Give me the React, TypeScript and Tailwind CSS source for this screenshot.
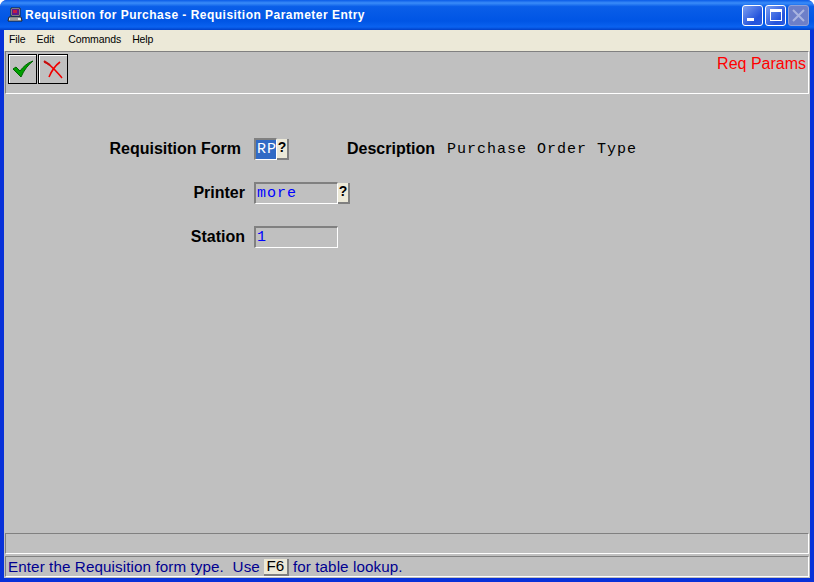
const sans = "font-['Liberation_Sans',Arial,sans-serif]";
const mono = "font-['Liberation_Mono','Courier_New',monospace]";
const sunken = "border-t border-r border-b border-l border-t-[#808080] border-r-white border-b-white border-l-[#808080]";
const field = "border-t-2 border-r border-b border-l-2 border-t-[#808080] border-r-white border-b-white border-l-[#808080]";

function AppIcon() {
  return (
    <svg width="16" height="16" viewBox="0 0 16 16" className="shrink-0">
      <path d="M4 1h9v8H4z" fill="#d8d8d8" stroke="#222" />
      <path d="M5 2h7v6H5z" fill="#5a1a8a" />
      <path d="M6 3h4v3H6z" fill="#c01848" />
      <path d="M2 10h12l1 4H1z" fill="#e8e8e8" stroke="#222" />
      <path d="M3 12h8" stroke="#555" />
    </svg>
  );
}

function CheckIcon() {
  return (
    <svg width="22" height="18" viewBox="0 0 22 18">
      <path d="M1 9l3-2 4 4C11 7 15 3 21 1c-5 4-9 9-12 16z" fill="#00a000" stroke="#006400" strokeWidth="1" />
    </svg>
  );
}

function CrossIcon() {
  return (
    <svg width="20" height="19" viewBox="0 0 20 19" fill="none">
      <path d="M1 2c6 1 12 9 18 16" stroke="#f00000" strokeWidth="1.6" />
      <path d="M17 2C13 5 9 10 6 17" stroke="#f00000" strokeWidth="1.6" />
      <path d="M1 1l6 4" stroke="#c01010" strokeWidth="2" />
    </svg>
  );
}

function WinButton({ children, off }: { children: React.ReactNode; off?: boolean }) {
  return (
    <div
      className={
        "flex h-[21px] w-[21px] items-center justify-center rounded-[3px] border " +
        (off ? "border-[#8fa0d8] bg-[#6d7fc8]" : "border-white bg-[linear-gradient(135deg,#7c9ff0,#2353dc_70%,#2a5ce0)]")
      }
    >
      {children}
    </div>
  );
}

function Lookup() {
  return (
    <div className="flex h-[21px] w-[12px] items-center justify-center border-r-2 border-b-2 border-[#808080] bg-[#ece9d8] pb-px text-[14px] font-bold text-black">
      ?
    </div>
  );
}

function Label({ children, width }: { children: React.ReactNode; width: string }) {
  return <div className={"text-right text-[16px] font-bold text-black " + width}>{children}</div>;
}

export default function App() {
  return (
    <div className={"flex h-[582px] w-[814px] flex-col overflow-hidden rounded-t-[7px] bg-[#0831d9] " + sans}>
      <div className="flex h-[30px] shrink-0 items-center bg-[linear-gradient(180deg,#0a5be8_0%,#3a8cf8_10%,#0a5ee8_22%,#0055e5_70%,#0a62f0_90%,#0040c8_100%)] pr-[5px] pl-[7px]">
        <AppIcon />
        <div className="ml-[2px] flex-1 text-[12px] font-bold tracking-[0.48px] whitespace-nowrap text-white">
          Requisition for Purchase - Requisition Parameter Entry
        </div>
        <div className="flex gap-[2px]">
          <WinButton>
            <div className="mt-[9px] mr-[4px] h-[3px] w-[7px] bg-white" />
          </WinButton>
          <WinButton>
            <div className="h-[12px] w-[12px] border border-t-[3px] border-white" />
          </WinButton>
          <WinButton off>
            <svg width="13" height="13" viewBox="0 0 13 13">
              <path d="M1 1l11 11M12 1L1 12" stroke="#a9b4e0" strokeWidth="2" />
            </svg>
          </WinButton>
        </div>
      </div>

      <div className="mx-1 mb-1 flex min-h-0 flex-1 flex-col bg-[#c0c0c0]">
        <div className="flex h-[21px] shrink-0 items-center gap-[11px] bg-[#ece9d8] px-[5px] pb-[2px] text-[10.5px] tracking-[-0.1px] text-black">
          <span>File</span>
          <span>Edit</span>
          <span className="ml-[3px]">Commands</span>
          <span>Help</span>
        </div>

        <div className={"mx-px flex h-[43px] shrink-0 justify-between pr-[2px] pl-[2px] " + sunken}>
          <div className="flex gap-px pt-[2px]">
            <div className="flex h-[30px] w-[29px] items-center justify-center border border-black shadow-[inset_1px_1px_0_#fff]">
              <CheckIcon />
            </div>
            <div className="flex h-[30px] w-[30px] items-center justify-center border border-black shadow-[inset_1px_1px_0_#fff]">
              <CrossIcon />
            </div>
          </div>
          <div className="pt-[2px] text-[16px] leading-[20px] text-[#ff0000]">Req Params</div>
        </div>

        <div className="flex flex-1 flex-col gap-[22px] pt-[44px]">
          <div className="flex h-[22px] items-center">
            <Label width="w-[237px]">Requisition Form</Label>
            <div className={"ml-[13px] flex h-[22px] w-[23px] items-stretch " + field}>
              <span className={"w-full bg-[#316ac5] pt-[1px] pl-[1px] text-[15px] leading-[17px] tracking-[1px] whitespace-nowrap text-white " + mono}>RP</span>
            </div>
            <Lookup />
            <Label width="ml-[58px]">Description</Label>
            <span className={"mt-[2px] ml-[12px] text-[15px] tracking-[1px] text-black " + mono}>Purchase Order Type</span>
          </div>
          <div className="flex h-[22px] items-center">
            <Label width="w-[241px]">Printer</Label>
            <div className={"ml-[9px] flex h-[22px] w-[84px] items-center pl-[1px] " + field}>
              <span className={"mt-[2px] text-[15px] tracking-[1px] text-[#0000ff] " + mono}>more</span>
            </div>
            <Lookup />
          </div>
          <div className="flex h-[22px] items-center">
            <Label width="w-[241px]">Station</Label>
            <div className={"ml-[9px] flex h-[22px] w-[84px] items-center pl-[1px] " + field}>
              <span className={"mt-[2px] text-[15px] tracking-[1px] text-[#0000ff] " + mono}>1</span>
            </div>
          </div>
        </div>

        <div className={"mx-px mb-[2px] h-[21px] shrink-0 " + sunken} />
        <div className={"mx-px mb-px flex h-[21px] shrink-0 items-center pt-px pl-[2px] text-[15.2px] tracking-[0.1px] whitespace-nowrap text-[#000090] " + sunken}>
          Enter the Requisition form type.&nbsp; Use
          <span className="mx-[4px] flex h-[17px] w-[25px] items-center justify-center border-r-2 border-b-2 border-[#808080] bg-[#ece9d8] text-black">F6</span>
          for table lookup.
        </div>
      </div>
    </div>
  );
}
